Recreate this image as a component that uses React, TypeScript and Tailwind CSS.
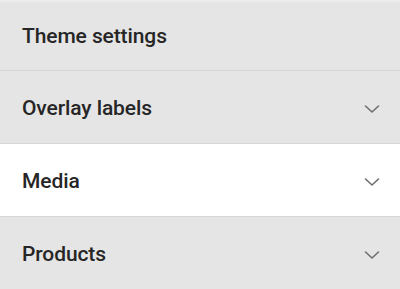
import React from "react";

const Chevron = () => (
  <svg width="16" height="16" viewBox="0 0 16 16" fill="none" className="text-[#6e6e6e]">
    <path d="M1.5 5 L8 11 L14.5 5" stroke="currentColor" strokeWidth="1.6" strokeLinecap="round" strokeLinejoin="round" />
  </svg>
);

const Row = ({ label, white, chevron, h, pt }: { label: string; white?: boolean; chevron?: boolean; h: string; pt: string }) => (
  <div
    className={`flex ${h} ${pt} items-center justify-between border-b border-[#d6d6d6] pl-[22px] pr-[20px] ${
      white ? "bg-white" : "bg-[#e5e5e5]"
    }`}
  >
    <span className="text-[21px] font-medium leading-none tracking-[-0.1px] text-[#262626]">{label}</span>
    {chevron && <Chevron />}
  </div>
);

export default function App() {
  return (
    <div className="h-[289px] w-[400px] overflow-hidden bg-[#e5e5e5]" style={{ fontFamily: 'Roboto, sans-serif' }}>
      <div className="h-[2px] bg-[#ececec]" />
      <Row label="Theme settings" h="h-[69px]" pt="pt-[1px]" />
      <Row label="Overlay labels" h="h-[73px]" pt="pt-[3px]" chevron />
      <Row label="Media" white h="h-[73px]" pt="pt-[3px]" chevron />
      <Row label="Products" h="h-[73px]" pt="pt-[3px]" chevron />
    </div>
  );
}
